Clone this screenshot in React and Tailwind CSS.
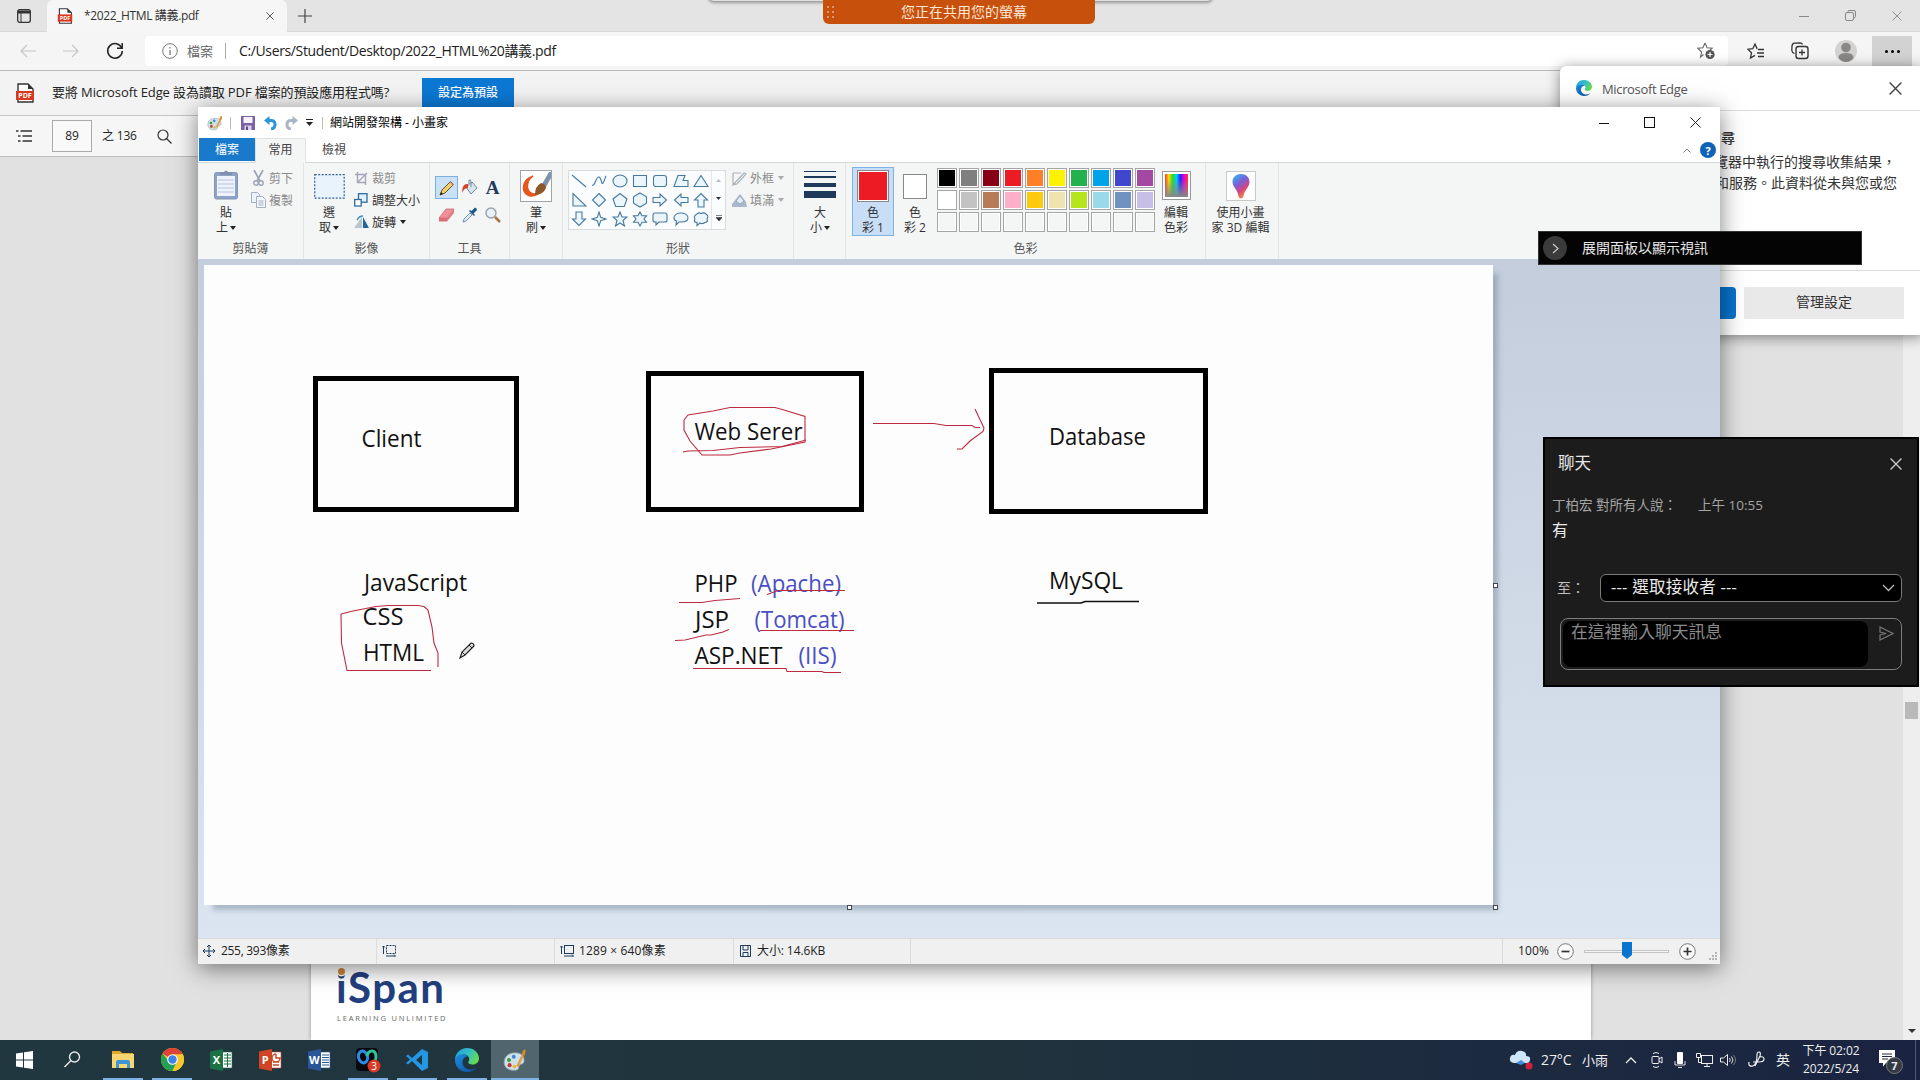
import React from "react";

const UI = "font-['Open_Sans','Noto_Sans_CJK_TC',sans-serif]";

function Svg({ w, h, vb, className = "", children }) {
  return (
    <svg width={w} height={h} viewBox={vb || `0 0 ${w} ${h}`} fill="none" className={"shrink-0 " + className}>
      {children}
    </svg>
  );
}

const Cross = ({ s = 11, c = "#333", sw = 1.2 }) => (
  <Svg w={s} h={s} vb="0 0 11 11"><path d="M.5.5l10 10M10.5.5l-10 10" stroke={c} strokeWidth={sw} /></Svg>
);
const Down = ({ c = "#222" }) => (
  <Svg w={6} h={4}><path d="M0 0h6L3 4z" fill={c} /></Svg>
);

const PdfIcon = ({ w, h }) => (
  <Svg w={w} h={h} vb="0 0 20 20">
    <path d="M3 1h10l5 5v13H3z" fill="#fff" stroke="#333" strokeWidth="1.4" />
    <path d="M13 1v5h5z" fill="#333" />
    <rect x="1" y="8" width="18" height="9" fill="#d9381e" />
    <text x="10" y="15" textAnchor="middle" fontSize="7" fontWeight="700" fill="#fff" fontFamily="Open Sans, sans-serif">PDF</text>
  </Svg>
);

const EdgeLogo = ({ s }) => (
  <Svg w={s} h={s} vb="0 0 24 24">
    <defs>
      <linearGradient id="edgeA" x1="0" y1="0" x2="1" y2="0.4"><stop offset="0" stopColor="#1b9de2" /><stop offset=".6" stopColor="#35c1c4" /><stop offset="1" stopColor="#62d957" /></linearGradient>
      <linearGradient id="edgeB" x1="0" y1="0" x2="1" y2="1"><stop offset="0" stopColor="#1b8fe0" /><stop offset="1" stopColor="#0c4f9e" /></linearGradient>
    </defs>
    <path d="M12 0c7 0 12 5 12 10.200c0 4-3 6.300-6.500 6.300c-3 0-4.300-1.300-4.300-2.200c0-.8 1-1.200 1-3C14.200 8.500 12 6.500 8.700 6.500C4 6.500.5 9.500 0 12C0 5 5.500 0 12 0z" fill="url(#edgeA)" />
    <path d="M0 12c.3-3 4-5.500 8.200-5.500c2 0 4 .8 5 2C10 8.200 7.500 10.800 7.500 14.500c0 5 5 7.500 9 7c2-.3 3.500-1 5.500-2.500C20 22 16.500 24 12 24C5 24 0 18.500 0 12z" fill="url(#edgeB)" />
  </Svg>
);

const Palette = ({ s }) => (
  <Svg w={s} h={s} vb="0 0 20 20">
    <path d="M1 12C1 7 5 4 10 4s8 3 7.500 7c-.4 3-3 2-4 3.500s.5 3.500-3 4C5 19 1 16.500 1 12z" fill="#cfe0ea" stroke="#8fa6b5" strokeWidth=".7" />
    <circle cx="5" cy="10" r="1.700" fill="#3f9a3d" /><circle cx="9" cy="7.300" r="1.600" fill="#3b86d1" />
    <circle cx="5.500" cy="14.300" r="1.700" fill="#c43a31" /><circle cx="9.500" cy="15.500" r="1.500" fill="#e8b92c" />
    <path d="M16.500 6L12 15.500" stroke="#e0a04a" strokeWidth="2.200" /><path d="M15 5.500l2.500-4.500l1.500 1l-1 4.500z" fill="#d08c2c" />
  </Svg>
);

/* ---------- Browser behind everything ---------- */

function BrowserTabs() {
  return (
    <div className="flex h-8 items-stretch bg-[#e4e4e4] border-b border-[#d9d9d9]">
      <div className="flex w-[47px] items-center justify-center">
        <Svg w={14} h={14}><rect x=".7" y=".7" width="12.600" height="12.600" rx="2" stroke="#333" strokeWidth="1.300" /><path d="M.7 3h12.600" stroke="#333" strokeWidth="3" /><path d="M4 3v10" stroke="#333" /></Svg>
      </div>
      <div className="flex h-8 w-[240px] items-center rounded-t-md bg-[#f6f6f6] pl-[10px]">
        <PdfIcon w={16} h={16} />
        <span className="ml-[11px] w-[182px] whitespace-nowrap text-[12px] leading-4 tracking-[-0.37px] text-[#333]">*2022_HTML 講義.pdf</span>
        <Cross s={8} c="#444" />
      </div>
      <div className="flex w-[35px] items-center justify-center"><Svg w={14} h={14}><path d="M7 0v14M0 7h14" stroke="#444" strokeWidth="1.200" /></Svg></div>
      <div className="flex flex-1 items-center justify-end gap-[36px] pr-[18px]">
        <Svg w={10} h={10}><path d="M0 5.500h10" stroke="#888" /></Svg>
        <Svg w={11} h={11}><rect x=".5" y="2.500" width="8" height="8" rx="1.500" stroke="#888" /><path d="M3 2V1.500q0-1 1-1h5q1.500 0 1.500 1.500v4.500q0 1-1.500 1.500" stroke="#888" /></Svg>
        <Cross s={10} c="#888" sw={1} />
      </div>
    </div>
  );
}

function AddressBar() {
  return (
    <div className="flex h-[39px] items-center border-b border-[#b9b9b9] bg-[#f5f5f5] pl-5">
      <div className="flex w-[125px] items-center gap-[27px]">
        <Svg w={16} h={14}><path d="M16 7H1M7 1L1 7l6 6" stroke="#c6c6c6" strokeWidth="1.200" /></Svg>
        <Svg w={16} h={14}><path d="M0 7h15M9 1l6 6l-6 6" stroke="#c6c6c6" strokeWidth="1.200" /></Svg>
        <Svg w={18} h={18}><path d="M15.800 6.200A7.300 7.300 0 1 0 16.300 9" stroke="#222" strokeWidth="1.500" /><path d="M16.200 1v5.200H11" stroke="#222" strokeWidth="1.500" /></Svg>
      </div>
      <div className="flex h-[30px] w-[1583px] items-center rounded bg-white pl-[17px]">
        <Svg w={16} h={16}><circle cx="8" cy="8" r="7.300" stroke="#777" /><path d="M8 7v5M8 4v1.500" stroke="#777" strokeWidth="1.300" /></Svg>
        <span className="ml-[9px] text-[13px] leading-5 text-[#666]">檔案</span>
        <span className="ml-[12px] h-4 w-px bg-[#aaa]" />
        <span className="ml-[13px] flex-1 whitespace-nowrap text-[14px] leading-5 tracking-[-0.37px] text-[#222]">C:/Users/Student/Desktop/2022_HTML%20講義.pdf</span>
        <Svg w={19} h={18} className="mr-[12px]"><path d="M8 1l2.100 4.700l5.100.5l-3.900 3.400M6.500 12.500L3.500 15l1.100-5L.8 6.200l5.100-.5L8 1" stroke="#666" strokeWidth="1.100" /><circle cx="13" cy="12.500" r="4.600" fill="#555" /><path d="M13 10v5M10.500 12.500h5" stroke="#fff" strokeWidth="1.200" /></Svg>
      </div>
      <div className="flex flex-1 items-center">
        <Svg w={18} h={17} className="ml-[19px]"><path d="M10.500 5.500H10L8 1L5.800 5.700L.8 6.200l3.700 3.600l-1 5.200l4.500-2.600" stroke="#333" strokeWidth="1.300" /><path d="M11 6.500h6M10 10h7M11 13.500h6" stroke="#333" strokeWidth="1.300" /></Svg>
        <Svg w={18} h={18} className="ml-[26px]"><path d="M3.500 11.500Q1 10.500.8 8.500L1 4q.3-2.500 2.500-2.800L9 .8q2 0 2.500 1.700" stroke="#333" strokeWidth="1.300" /><rect x="5" y="4.500" width="12" height="12" rx="2.500" stroke="#333" strokeWidth="1.400" /><path d="M11 7.500v6M8 10.500h6" stroke="#333" strokeWidth="1.300" /></Svg>
        <Svg w={22} h={22} className="ml-[26px]"><circle cx="11" cy="11" r="11" fill="#d4d2d0" /><circle cx="11" cy="7.500" r="4.800" fill="#8a8886" /><path d="M3.500 18q0-5 7.500-5t7.500 5q-3 4-7.500 4t-7.500-4z" fill="#8a8886" /></Svg>
        <div className="ml-[15px] flex h-[31px] w-[40px] items-center justify-center gap-[3px] bg-[#d2d2d2]">
          <span className="size-[3px] rounded-full bg-black" /><span className="size-[3px] rounded-full bg-black" /><span className="size-[3px] rounded-full bg-black" />
        </div>
      </div>
    </div>
  );
}

function Browser() {
  return (
    <div className="flex h-[1040px] flex-col">
      <BrowserTabs />
      <AddressBar />
      <div className="flex h-[45px] items-center border-b border-[#c4c4c4] bg-[#f3f3f3] pl-[15px] text-[13px] text-[#222]">
        <PdfIcon w={20} h={20} />
        <span className="ml-[17px] -mt-[2px] w-[370px] whitespace-nowrap leading-5 tracking-[-0.11px]">要將 Microsoft Edge 設為讀取 PDF 檔案的預設應用程式嗎?</span>
        <span className="flex h-[30px] w-[92px] items-center justify-center bg-[#0b78d4] text-[12px] font-medium text-white">設定為預設</span>
      </div>
      <div className="flex h-[41px] items-center border-b border-[#bdbdbd] bg-[#f6f6f6] pl-4 text-[12px] text-[#222]">
        <Svg w={16} h={12}><path d="M0 1h2.500M4.500 1H16M2 6h2.500M6.500 6H16M2 11h2.500M6.500 11H16" stroke="#333" strokeWidth="1.300" /></Svg>
        <span className="ml-5 flex h-[32px] w-[40px] items-center justify-center border border-[#aaa] bg-[#f9f9f9]">89</span>
        <span className="ml-[10px] w-[55px] leading-4 tracking-[-0.2px]">之 136</span>
        <Svg w={15} h={15}><circle cx="6" cy="6" r="5" stroke="#333" strokeWidth="1.200" /><path d="M9.500 9.500l5 5" stroke="#333" strokeWidth="1.200" /></Svg>
      </div>
      <div className="flex min-h-0 flex-1 bg-[#e1e1e1]">
        <div className="ml-[311px] flex w-[1280px] flex-col justify-end bg-white pl-[25px] pb-[17px] shadow-[0_0_4px_#999]">
          <div className="relative mb-[3px] h-[46px] w-[114px] whitespace-nowrap text-[42px] font-bold leading-[46px] tracking-[1.5px] text-[#22407f] font-['Lato',sans-serif]">
            iSpan
            <span className="absolute left-[2px] top-[4px] size-[7px] rounded-full bg-[#cf8638] shadow-[0_0_0_1.5px_white]" />
          </div>
          <div className="whitespace-nowrap pl-px text-[7.500px] leading-[10px] tracking-[1.8px] text-[#666]">LEARNING UNLIMITED</div>
        </div>
        <div className="ml-auto flex w-[17px] flex-col items-center bg-[#eeeeee]">
          <div className="mt-[545px] h-[17px] w-[13px] bg-[#b9b9b9]" />
          <div className="mt-auto mb-[7px]"><Svg w={8} h={4}><path d="M0 0h8L4 4z" fill="#333" /></Svg></div>
        </div>
      </div>
    </div>
  );
}

function EdgePopup() {
  return (
    <div className="absolute left-[1560px] top-[66px] flex h-[269px] w-[364px] flex-col rounded-md bg-white shadow-[0_2px_14px_rgba(0,0,0,0.45)]">
      <div className="flex h-[45px] items-center border-b border-[#ddd] pl-4">
        <EdgeLogo s={16} />
        <span className="ml-[10px] mt-[2px] w-[287px] text-[13px] leading-5 tracking-[-0.35px] text-[#555]">Microsoft Edge</span>
        <Cross s={13} c="#444" />
      </div>
      <div className="flex h-[160px] flex-col border-b border-[#ddd] pl-[154px] pt-[16px] text-[14px] text-[#333]">
        <div className="whitespace-nowrap pl-[7px] leading-[22px] font-medium">尋</div>
        <div className="mt-[2px] whitespace-nowrap leading-[21px]">覽器中執行的搜尋收集結果，</div>
        <div className="whitespace-nowrap pl-[1px] leading-[21px]">和服務。此資料從未與您或您</div>
      </div>
      <div className="flex pl-4 pt-4 text-[14px] text-[#333]">
        <span className="h-8 w-[160px] rounded-sm bg-[#0873cc]" />
        <span className="ml-2 flex h-8 w-[160px] items-center justify-center bg-[#e9e9e9] pb-[3px]">管理設定</span>
      </div>
    </div>
  );
}

/* ---------- Paint window ---------- */

function Group({ cls, label, children }) {
  return (
    <div className={"flex h-[96px] flex-col border-r border-[#e3e4e5] " + cls}>
      <div className="flex h-[76px]">{children}</div>
      <div className="h-[20px] text-center text-[12px] leading-[20px] text-[#555]">{label}</div>
    </div>
  );
}

function Big({ icon, a, b, arrow, cls = "" }) {
  return (
    <div className={"flex flex-col items-center text-[12px] leading-[15px] text-[#333] " + cls}>
      <div className="flex h-[42px] items-center justify-center">{icon}</div>
      <div className="h-[15px] whitespace-nowrap">{a}</div>
      <div className="flex h-[15px] items-center gap-[2px] whitespace-nowrap">{b}{arrow && <Down />}</div>
    </div>
  );
}

function Small({ icon, t, arrow, dim }) {
  return (
    <div className={"flex h-[22px] items-center whitespace-nowrap text-[12px] leading-[15px] " + (dim ? "text-[#8c8c8c]" : "text-[#333]")}>
      <span className="flex w-[16px] justify-center">{icon}</span>
      <span className="ml-[3px] mr-[4px]">{t}</span>
      {arrow && <Down c={dim ? "#aaa" : "#222"} />}
    </div>
  );
}

const SHAPES = [
  "M1 2L15 14", "M1 12C4 14 5 3 8 4S10 12 12 10S14 4 15 3", "M8 2C12 2 15 5 15 8S12 14 8 14S1 11 1 8S4 2 8 2z", "M1.500 2.500h13v11h-13z",
  "M4 2.500h8q2.500 0 2.500 2.500v6q0 2.500-2.500 2.500H4q-2.500 0-2.500-2.500V5q0-2.500 2.500-2.500z", "M5 2.500h7l-2 5h5v6H1z", "M8 2.500L15 13.500H1z",
  "M2 1.500v12.500h13z", "M8 1.500l6.500 6.500L8 14.500L1.500 8z", "M8 1.500l7 5.500l-2.700 7.500H3.700L1 7z", "M8 1l6.500 3.700v6.600L8 15L1.500 11.300V4.700z",
  "M1 5.500h7V2l6.500 6L8 14v-3.500H1z", "M15 5.500H8V2L1.500 8L8 14v-3.500h7z", "M5 15V8H1.500L8 1.500L14.500 8H11v7z",
  "M5 1v7H1.500L8 14.500L14.500 8H11V1z", "M8 1l1.700 5.300L15 8l-5.300 1.700L8 15l-1.700-5.300L1 8l5.300-1.700z", "M8 1l2 5h5l-4 3.500l1.500 5.500L8 12l-4.500 3L5 9.500L1 6h5z",
  "M8 1l2 3.700h4.500L12 8l2.500 3.300H10L8 15l-2-3.700H1.500L4 8L1.500 4.700H6z", "M3 2h10q2 0 2 2v5q0 2-2 2H7l-3 3v-3H3q-2 0-2-2V4q0-2 2-2z",
  "M8 2c4 0 7 2 7 4.700S12 11 8 11q-1 0-2 0l-3 3l.5-4C2 9.500 1 8 1 6.700C1 4 4 2 8 2z", "M4 3Q6 1 8 2.500Q11 1 13 3Q16 5 14 8Q15.500 11 12 11.500Q9 13.500 7 12L4 14.500V11.500Q0 11 2 8Q0 5 4 3z",
];

const ROW1 = ["bg-[#000000]", "bg-[#7f7f7f]", "bg-[#880015]", "bg-[#ed1c24]", "bg-[#ff7f27]", "bg-[#fff200]", "bg-[#22b14c]", "bg-[#00a2e8]", "bg-[#3f48cc]", "bg-[#a349a4]"];
const ROW2 = ["bg-[#ffffff]", "bg-[#c3c3c3]", "bg-[#b97a57]", "bg-[#ffaec9]", "bg-[#ffc90e]", "bg-[#efe4b0]", "bg-[#b5e61d]", "bg-[#99d9ea]", "bg-[#7092be]", "bg-[#c8bfe7]"];
const ROW3 = Array(10).fill("bg-[#f4f5f5]");

function Ribbon() {
  return (
    <div className="flex h-[96px] bg-[#f4f5f5]">
      <Group cls="w-[106px]" label="剪貼簿">
        <Big cls="ml-[13px] w-[30px]" a="貼" b="上" arrow icon={
          <Svg w={24} h={30} className="mt-[2px]"><rect x=".5" y="2.500" width="23" height="26.500" rx="2" fill="#8fa3c6" stroke="#8496b6" /><rect x="3" y="6" width="18" height="20" fill="#eef3fb" /><path d="M4 10h16M4 14h16M4 18h16M4 22h16" stroke="#b3c3df" /><path d="M6 5l1-3h3q2-3 4 0h3l1 3z" fill="#7f90ad" /></Svg>} />
        <div className="ml-[9px] flex flex-col pt-[4px]">
          <Small dim t="剪下" icon={<Svg w={11} h={16}><path d="M1 0l6 11M10 0L4 11" stroke="#9aa4b4" strokeWidth="1.700" /><circle cx="3" cy="13" r="2.200" stroke="#9aa4b4" strokeWidth="1.400" /><circle cx="8" cy="13" r="2.200" stroke="#9aa4b4" strokeWidth="1.400" /></Svg>} />
          <Small dim t="複製" icon={<Svg w={15} h={16}><path d="M.5.5h6l2 2v8h-8z" fill="#eef2f8" stroke="#a3b1c8" /><path d="M5.500 4.500h6l3 3v8h-9z" fill="#f4f7fb" stroke="#a3b1c8" /><path d="M7.500 9h5M7.500 11h5M7.500 13h5" stroke="#a3b1c8" /></Svg>} />
        </div>
      </Group>
      <Group cls="w-[126px]" label="影像">
        <Big cls="ml-[10px] w-[30px]" a="選" b="取" arrow icon={<Svg w={31} h={25} className="mt-[4px]"><rect x=".7" y=".7" width="29.500" height="23.500" fill="#e9f3fc" stroke="#2f6392" strokeWidth="1.200" strokeDasharray="2 1.500" /></Svg>} />
        <div className="ml-[9px] flex flex-col pt-[4px]">
          <Small dim t="裁剪" icon={<Svg w={13} h={13}><path d="M2.500 0v10.500H11M0 2.500h10.500V13M3 10L12 1" stroke="#a3a6bd" strokeWidth="1.400" /></Svg>} />
          <Small t="調整大小" icon={<Svg w={14} h={14}><rect x="4.500" y=".7" width="8.500" height="8.500" fill="#e3f1fb" stroke="#2b6ca3" strokeWidth="1.300" /><rect x=".7" y="6.500" width="6.500" height="6.500" fill="#fff" stroke="#2b6ca3" strokeWidth="1.300" /></Svg>} />
          <Small t="旋轉" arrow icon={<Svg w={15} h={14}><path d="M0 13h8V2z" fill="#b9c6d2" /><path d="M9 2v11h6z" fill="#23679a" /><path d="M3 5Q5 1 9 1" stroke="#3a8dc5" strokeWidth="1.300" /></Svg>} />
        </div>
      </Group>
      <Group cls="w-[80px]" label="工具">
        <div className="ml-[5px] mt-[13px] grid h-[55px] grid-cols-[23px_23px_23px] grid-rows-[23px_1fr] place-items-center">
          <span className="flex size-[23px] items-center justify-center border border-[#7ab0e5] bg-[#c9e0f7]"><Svg w={16} h={16}><path d="M1 15l2-5L11.500 1.500l3 3L6 13z" fill="#f0cf6a" stroke="#655227" /><path d="M1 15l1-3l2 2z" fill="#222" /><path d="M11.500 1.500l3 3l-1 1l-3-3z" fill="#d88" /></Svg></span>
          <Svg w={17} h={17}><path d="M5 8l6-5l5 6l-6 6z" fill="#d9e5ee" stroke="#73899c" /><path d="M8 5V1q2-1 2 2v5" stroke="#73899c" /><path d="M7 5Q1 4 1 14q2-5 6-5z" fill="#d8432c" /></Svg>
          <span className="font-['Liberation_Serif',serif] text-[19px] font-bold leading-[20px] text-[#223a5e]">A</span>
          <Svg w={17} h={14}><path d="M1 10l7-9h8l-7 9z" fill="#f0919a" stroke="#cf6a72" strokeWidth=".8" /><path d="M1 10h8v3.500H1z" fill="#dc6d77" /><path d="M9 10l7-9v4l-7 8.500z" fill="#e17d86" /></Svg>
          <Svg w={16} h={16}><path d="M1 15l1-3l6-6l2 2l-6 6z" fill="#dbeaf4" stroke="#5b7f9c" strokeWidth=".8" /><path d="M7 4l5 5l1-1l-1.500-1.500L15 3q0-2-2-2.500L9.500 4L8 3z" fill="#1d5788" /></Svg>
          <Svg w={16} h={16}><circle cx="6" cy="6" r="5" fill="#e6f1f8" stroke="#98a1a8" strokeWidth="1.400" /><path d="M10 10l5 5" stroke="#a9743f" strokeWidth="2.500" /></Svg>
        </div>
      </Group>
      <Group cls="w-[53px]" label="">
        <Big cls="ml-[9px] w-[34px]" a="筆" b="刷" arrow icon={
          <span className="mt-[4px] flex size-[32px] items-center justify-center border border-[#a0a4aa] bg-white"><Svg w={30} h={30}><path d="M12 5Q0 10 3 20Q7 28 17 23Q8 24 6.500 17Q6 9 12 5z" fill="#e4581d" stroke="#e4581d" strokeWidth="1.500" /><path d="M21 13L28 1l2 0v6l-5 9z" fill="#7d93ab" /><path d="M14 24Q14 15 20 12q5 1 5 5q-3 7-11 7z" fill="#8c5729" /></Svg></span>} />
      </Group>
      <Group cls="w-[231px]" label="形狀">
        <div className="ml-[5px] mt-[7px] flex h-[60px] w-[158px] border border-[#d8dcdf] bg-[#fbfcfd]">
          <div className="grid w-[142px] grid-cols-7 grid-rows-3 place-items-center">
            {SHAPES.map((d, i) => <Svg key={i} w={16} h={16}><path d={d} fill={i < 2 ? "none" : "#eaf6fc"} stroke="#48799f" strokeWidth="1.100" /></Svg>)}
          </div>
          <div className="flex w-[14px] flex-col items-center justify-around border-l border-[#e4e6e8]">
            <Svg w={5} h={3}><path d="M0 3h5L2.500 0z" fill="#bbb" /></Svg>
            <Svg w={5} h={3}><path d="M0 0h5L2.500 3z" fill="#333" /></Svg>
            <Svg w={6} h={6}><path d="M0 .5h6M0 2.500h6L3 6z" fill="#333" stroke="#333" strokeWidth=".6" /></Svg>
          </div>
        </div>
        <div className="ml-[5px] flex flex-col pt-[4px]">
          <Small dim arrow t="外框" icon={<Svg w={15} h={15}><path d="M1 2h8M1 2v11h3M1 14L12 2l2 1L5 13z" stroke="#a9b1b9" strokeWidth="1.200" /></Svg>} />
          <Small dim arrow t="填滿" icon={<Svg w={15} h={16}><path d="M0 15V12L8 2l6 8l1 5z" fill="#a9b8ca" /><path d="M4 9l4-5l4 5l-4 3z" fill="#e6edf5" stroke="#9aa9bb" /></Svg>} />
        </div>
      </Group>
      <Group cls="w-[52px]" label="">
        <Big cls="ml-[9px] w-[34px]" a="大" b="小" arrow icon={
          <div className="flex w-[32px] flex-col"><i className="h-px bg-[#1d3a5a]" /><i className="mt-[4px] h-[2px] bg-[#1d3a5a]" /><i className="mt-[5px] h-[4px] bg-[#1d3a5a]" /><i className="mt-[4px] h-[7px] bg-[#1d3a5a]" /></div>} />
      </Group>
      <Group cls="w-[360px]" label="色彩">
        <div className="ml-[6px] mt-[4px] h-[69px] w-[42px] border border-[#7fb2e4] bg-[#c7def6]">
          <Big cls="-mt-[5px]" a="色" b="彩 1" icon={<span className="mt-[3px] size-[32px] border border-[#888] bg-white p-[1px]"><span className="block size-full bg-[#ed1c24]" /></span>} />
        </div>
        <Big cls="ml-[6px] w-[30px]" a="色" b="彩 2" icon={<span className="mt-[4px] h-[25px] w-[24px] border border-[#888] bg-white" />} />
        <div className="ml-[7px] mt-[5px] grid h-[64px] grid-cols-[repeat(10,20px)] grid-rows-[repeat(3,20px)] gap-[2px]">
          {[...ROW1, ...ROW2, ...ROW3].map((c, i) => <span key={i} className="border border-[#a5a5a5] bg-white p-px"><span className={"block size-full " + c} /></span>)}
        </div>
        <Big cls="ml-[5px] w-[32px]" a="編輯" b="色彩" icon={<span className="mt-[3px] size-[29px] border border-[#999] bg-white p-[2px]"><span className="block size-full bg-[linear-gradient(to_bottom,transparent_20%,#888),linear-gradient(to_right,#f33,#fd0,#2d2,#0cf,#22f,#e0c,#f33)]" /></span>} />
      </Group>
      <Group cls="w-[73px]" label="">
        <Big cls="w-[69px]" a="使用小畫" b="家 3D 編輯" icon={<span className="mt-[3px] flex size-[30px] items-center justify-center border border-[#c9c9c9] bg-white"><Svg w={20} h={26}><defs><linearGradient id="p3d" x1="0" y1="0" x2=".5" y2="1"><stop offset="0" stopColor="#27c4ee" /><stop offset=".45" stopColor="#7b5fd8" /><stop offset=".75" stopColor="#d9447a" /><stop offset="1" stopColor="#f08a3a" /></linearGradient></defs><path d="M10 1c5 0 8.500 3.500 8.500 8c0 5-5 8-6 14q-.5 2.500-2.500 2.500T7.500 23c-.5-6-6-9-6-14C1.500 4.500 5 1 10 1z" fill="url(#p3d)" /></Svg></span>} />
      </Group>
    </div>
  );
}

const NOTES = [
  ["Client", 361.5, 447, 60], ["Web Serer", 694.5, 440, 108], ["Database", 1049, 445, 97],
  ["JavaScript", 364, 591, 103], ["CSS", 362.5, 625, 41], ["HTML", 363, 661, 61],
  ["PHP", 694.5, 592, 43], ["JSP", 695, 628, 34], ["ASP.NET", 694.5, 664, 88], ["MySQL", 1049, 589, 74],
  ["(Apache)", 751, 592, 90, 1], ["(Tomcat)", 754.5, 628, 90, 1], ["(IIS)", 798.5, 664, 38, 1],
];

const PEN = [
  "M684 420L688 415L713 411L730 407.500H775L784 410L805 416.500V442L771 449L740 453L730 455H702L690 441L684 430Z",
  "M683 452L688 451L713 450.500L740 447.500L782 446.500L806 440",
  "M679 602.500H702L715 600.500L740 598.500", "M675 640.500L685 640L706 635H711L723 632L729 629.500",
  "M693 668.500H786L787 671.500H822L824 672.500H841", "M767 594.500L778 590.500H845", "M760 630.500H854",
  "M341 614L353 611L376 606.500L388 605.500H418L424 606.500L428 610L432 627L434 643L438 653V667M341 614L341.500 643L347 670.500H431",
  "M873 423.500H934L946 425.500H972L975 427.500H980M975 409L984 428L983 431.500L970 441L962 449H957",
];

function Canvas() {
  return (
    <Svg w={1289} h={640} vb="204 265 1289 640" className="bg-[#fdfdfd]">
      <g stroke="#000" strokeWidth="5"><rect x="315.500" y="378.500" width="201" height="131" /><rect x="648.500" y="373.500" width="213" height="136" /><rect x="991.500" y="370.500" width="214" height="141" /></g>
      <g fontFamily="Open Sans, sans-serif" fontSize="24">
        {NOTES.map(([t, x, y, w, blue]) => <text key={t} x={x} y={y} textLength={w} lengthAdjust="spacingAndGlyphs" fill={blue ? "#4a4fc4" : "#111"}>{t}</text>)}
      </g>
      <g stroke="#bd2b40" strokeWidth="1.100">{PEN.map((d) => <path key={d} d={d} />)}</g>
      <path d="M1037 603H1081L1085 601.500H1139" stroke="#111" strokeWidth="1.500" />
      <path d="M460 658l2-6l9-9q3 0 3 3l-9 9z" fill="#ddd" stroke="#222" strokeWidth="1.200" />
      <path d="M462 652l3 3M469 645l3 3" stroke="#222" />
    </Svg>
  );
}

const Handle = ({ cls }) => <span className={"absolute size-[5px] border border-[#445] bg-white " + cls} />;

function StatusCell({ cls, icon, t }) {
  return (
    <div className={"flex items-center gap-[6px] whitespace-nowrap border-r border-[#dcdcdc] pb-px " + cls}>{icon}<span className="tracking-[-0.3px]">{t}</span></div>
  );
}

function PaintWindow() {
  return (
    <div className="absolute left-[198px] top-[107px] flex h-[857px] w-[1522px] flex-col bg-white shadow-[0_4px_22px_rgba(0,0,0,0.5)]">
      <div className="flex h-[31px] items-center pl-[9px]">
        <Palette s={16} />
        <span className="ml-[7px] h-[12px] w-px bg-[#bbb]" />
        <Svg w={14} h={14} className="ml-[10px]"><path d="M0 0h14v14H0z" fill="#7b62a6" /><path d="M2.500 1h9v6h-9z" fill="#f4f1f8" /><path d="M3.500 9.500h7V14h-7z" fill="#d9d0e6" /><path d="M5 10.500h2V14H5z" fill="#63489a" /></Svg>
        <Svg w={13} h={14} className="ml-[9px]"><path d="M3 4.500h4q4 0 4 4t-4 4.500" stroke="#2a97d8" strokeWidth="3" /><path d="M0 4.500L5.500 0v9z" fill="#2a97d8" /></Svg>
        <Svg w={13} h={14} className="ml-[8px]"><path d="M10 4.500H6q-4 0-4 4T6 13" stroke="#a9b6c2" strokeWidth="3" /><path d="M13 4.500L7.500 0v9z" fill="#a9b6c2" /></Svg>
        <Svg w={7} h={7} className="ml-[8px]"><path d="M0 .5h7" stroke="#222" /><path d="M0 3h7L3.500 7z" fill="#222" /></Svg>
        <span className="ml-[9px] h-[12px] w-px bg-[#bbb]" />
        <span className="ml-[7px] whitespace-nowrap text-[12px] leading-4 text-black">網站開發架構 - 小畫家</span>
        <div className="ml-auto flex items-center gap-[35px] pr-[19px]">
          <Svg w={10} h={10}><path d="M0 5.500h10" stroke="#111" /></Svg>
          <Svg w={11} h={11}><rect x=".5" y=".5" width="10" height="10" stroke="#111" /></Svg>
          <Cross s={11} c="#222" sw={1} />
        </div>
      </div>
      <div className="flex h-[25px] border-b border-[#d5d8da] text-[12px] leading-[23px] text-[#444]">
        <span className="ml-px h-[23px] w-[56px] bg-[#1979ca] text-center text-white">檔案</span>
        <span className="h-[25px] w-[51px] border-x border-t border-[#dfe1e3] bg-[#f4f5f5] text-center leading-[22px]">常用</span>
        <span className="ml-[16px]">檢視</span>
        <div className="ml-auto flex items-center gap-[9px] pr-[4px]">
          <Svg w={8} h={5}><path d="M.5 4.500L4 1l3.500 3.500" stroke="#888" /></Svg>
          <span className="flex size-[16px] items-center justify-center rounded-full bg-[#0f62b5] text-[11px] font-bold leading-none text-white">?</span>
        </div>
      </div>
      <Ribbon />
      <div className="relative flex h-[679px] bg-linear-to-b from-[#c3cddc] to-[#dbe5f1] pl-[6px] pt-[6px]">
        <div className="h-[640px] w-[1289px] shadow-[7px_7px_5px_-2px_rgba(120,140,155,0.5)]"><Canvas /></div>
        <Handle cls="left-[1295px] top-[324px]" />
        <Handle cls="left-[1295px] top-[646px]" />
        <Handle cls="left-[649px] top-[646px]" />
      </div>
      <div className="flex h-[26px] items-stretch border-t border-[#dadada] bg-[#f0f0f0] pl-[5px] text-[12px] leading-4 text-[#222]">
        <StatusCell cls="w-[174px]" t="255, 393像素" icon={<Svg w={12} h={12}><path d="M6 0v12M0 6h12M4 2l2-2l2 2M4 10l2 2l2-2M2 4L0 6l2 2M10 4l2 2l-2 2" stroke="#1d3c5c" /></Svg>} />
        <StatusCell cls="w-[178px] pl-[5px]" t="" icon={<Svg w={14} h={12}><rect x="4.500" y=".5" width="9" height="8" stroke="#1d3c5c" strokeDasharray="2 1" /><path d="M1.500 9V1M0 2.500L1.500 1L3 2.500M4 11h9M12 9.500l1.500 1.500L12 12.500" stroke="#1d3c5c" /></Svg>} />
        <StatusCell cls="w-[179px] pl-[5px] tracking-tight" t={<span className="tracking-[0.15px]">1289 × 640像素</span>} icon={<Svg w={14} h={12} className="-mr-px"><rect x="4.500" y=".5" width="9" height="8" stroke="#1d3c5c" /><path d="M1.500 9V1M0 2.500L1.500 1L3 2.500M4 11h9M12 9.500l1.500 1.500L12 12.500" stroke="#1d3c5c" /></Svg>} />
        <StatusCell cls="w-[177px] pl-[6px]" t={<span className="tracking-[-0.1px]">大小: 14.6KB</span>} icon={<Svg w={11} h={12}><path d="M.5.5h10v11H.5zM3 1v4h5V1M3 11V7.500h5V11" stroke="#1d3c5c" /></Svg>} />
        <div className="ml-[591px] flex flex-1 items-center border-l border-[#dcdcdc] pl-[15px]">
          <span className="w-[39px] pb-px tracking-[0.1px]">100%</span>
          <Svg w={17} h={17}><circle cx="8.500" cy="8.500" r="7.800" fill="#fafafa" stroke="#777" /><path d="M4.500 8.500h8" stroke="#333" strokeWidth="1.700" /></Svg>
          <div className="relative ml-[10px] h-[3px] w-[85px] border border-[#c4c4c4] bg-[#f6f6f6]">
            <Svg w={10} h={17} className="absolute -top-[9px] left-[37px]"><path d="M0 0h10v13l-5 4l-5-4z" fill="#0b74cf" /></Svg>
          </div>
          <Svg w={17} h={17} className="ml-[10px]"><circle cx="8.500" cy="8.500" r="7.800" fill="#fafafa" stroke="#777" /><path d="M4.500 8.500h8M8.500 4.500v8" stroke="#333" strokeWidth="1.700" /></Svg>
          <Svg w={9} h={9} className="mb-[3px] mr-[2px] ml-auto self-end"><path d="M6 0h2v2H6zM6 3h2v2H6zM3 3h2v2H3zM6 6h2v2H6zM3 6h2v2H3zM0 6h2v2H0z" fill="#b5b5b5" /></Svg>
        </div>
      </div>
    </div>
  );
}

/* ---------- Meeting overlays ---------- */

function SharePill() {
  return (
    <>
      <div className="absolute left-[708px] top-[-8px] h-[10px] w-[505px] rounded-b-md border border-[#a5a5a5] bg-[#dfdfdf] shadow-[0_1px_3px_#999]" />
      <div className="absolute left-[823px] top-0 flex h-6 w-[272px] items-center justify-center rounded-b-md bg-[#c6500c] pl-[10px] text-[14px] leading-6 text-[#fce6d6]">
        <div className="absolute left-[4px] top-[6px] grid grid-cols-2 gap-[3px]">
          {[0, 1, 2, 3, 4, 5].map((i) => <span key={i} className="size-[2px] bg-[#e39465]" />)}
        </div>
        您正在共用您的螢幕
      </div>
    </>
  );
}

function VideoBar() {
  return (
    <div className="absolute left-[1538px] top-[231px] flex h-[34px] w-[324px] items-center border border-[#333] bg-[#040404] pl-[4px] text-[14px] text-[#e6e6e6]">
      <span className="flex size-6 items-center justify-center rounded-full bg-[#3b3b3b]"><Svg w={7} h={11}><path d="M1 1l5 4.500L1 10" stroke="#ccc" strokeWidth="1.200" /></Svg></span>
      <span className="ml-[15px] pb-[2px]">展開面板以顯示視訊</span>
    </div>
  );
}

function ChatPanel() {
  return (
    <div className="absolute left-[1543px] top-[437px] flex h-[250px] w-[376px] flex-col border-2 border-black bg-[#1c1c1c] pl-[8px] text-[#e8e8e8]">
      <div className="flex h-[49px] items-center justify-between pl-[5px] pr-[15px] text-[16.500px]"><span>聊天</span><Cross s={12} c="#ccc" /></div>
      <div className="mt-[7px] flex h-[20px] whitespace-nowrap text-[13.500px] leading-5 text-[#a5a5a5]"><span className="-ml-px w-[146px]">丁柏宏 對所有人說：</span><span>上午 10:55</span></div>
      <div className="-ml-px mt-[3px] h-[24px] text-[16px] leading-6">有</div>
      <div className="mt-[32px] flex h-[28px] items-center pl-[4px]">
        <span className="w-[43px] pb-[2px] text-[14px] text-[#c0c0c0]">至：</span>
        <div className="flex h-[28px] w-[302px] items-center justify-between rounded-md border border-[#7a7a7a] bg-black pl-[10px] pr-[6px] text-[16.500px]"><span className="pb-px tracking-[0.25px]">--- 選取接收者 ---</span><Svg w={13} h={8}><path d="M1 1l5.500 5.500L12 1" stroke="#bbb" strokeWidth="1.300" /></Svg></div>
      </div>
      <div className="ml-[7px] mt-[16px] flex h-[52px] w-[342px] rounded-lg border border-[#7d7d7d] p-[2px]">
        <div className="h-full w-[305px] rounded-lg bg-black pl-[8px] text-[16.800px] leading-[22px] text-[#8a8a8a]">在這裡輸入聊天訊息</div>
        <Svg w={15} h={15} className="ml-[11px] mt-[5px]"><path d="M1 1l13 6.500L1 14V9l6-1.500L1 6z" stroke="#777" strokeWidth="1.200" /></Svg>
      </div>
    </div>
  );
}

/* ---------- Taskbar ---------- */

const Office = ({ c, l, rows }) => (
  <Svg w={24} h={24}>
    <path d="M12 4h11v16H12z" fill="#fff" stroke={c} strokeWidth=".6" />
    {rows}
    <path d="M1 3.500L14 1v22L1 20.500z" fill={c} />
    <text x="7.300" y="16" textAnchor="middle" fontSize="11" fontWeight="700" fill="#fff" fontFamily="Open Sans, sans-serif">{l}</text>
  </Svg>
);

function TaskItem({ cls, on, children }) {
  return (
    <div className={"flex h-10 flex-col items-center " + cls}>
      <div className="flex h-[38px] items-center justify-center pt-px">{children}</div>
      {on && <div className={"h-[2px] bg-[#7fb2e4] " + on} />}
    </div>
  );
}

function Taskbar() {
  return (
    <div className="absolute left-0 top-[1040px] flex h-10 w-[1920px] items-center bg-linear-to-r from-[#21373f] via-[#1f333c] to-[#1a2341] text-white">
      <TaskItem cls="w-[48px]"><Svg w={17} h={18}><path d="M0 2.500L7 1.500v7H0zM8 1.300L17 0v8.500H8zM0 9.500h7v7L0 15.500zM8 9.500h9V18l-9-1.300z" fill="#fff" /></Svg></TaskItem>
      <TaskItem cls="w-[49px]"><Svg w={17} h={17}><circle cx="10.500" cy="6" r="5" stroke="#e8e8e8" strokeWidth="1.400" /><path d="M7 9.500L.5 16" stroke="#e8e8e8" strokeWidth="1.400" /></Svg></TaskItem>
      <TaskItem cls="w-[51px]" on="w-[40px]"><Svg w={22} h={19}><path d="M0 1h8l2 2h11v4H0z" fill="#e0a92e" /><path d="M0 4h22v14H0z" fill="#f8d772" /><path d="M4 18v-6q0-2 2-2h10q2 0 2 2v6h-3v-4H7v4z" fill="#3d95d6" /></Svg></TaskItem>
      <TaskItem cls="w-[48px]" on="w-[40px]">
        <Svg w={23} h={23} vb="0 0 24 24"><circle cx="12" cy="12" r="12" fill="#f6c62c" /><path d="M12 12L1.600 6A12 12 0 0 1 22.400 6z" fill="#dd4437" /><path d="M1.600 6A12 12 0 0 0 12 24l4-9l-6 1z" fill="#23a155" /><path d="M12 6.500h10.700L22.400 6A12 12 0 0 1 12 24l5-9z" fill="#f6c62c" /><circle cx="12" cy="12" r="5.500" fill="#fff" /><circle cx="12" cy="12" r="4.400" fill="#4083e8" /></Svg>
      </TaskItem>
      <TaskItem cls="w-[49px]"><Office c="#1d7245" l="X" rows={<path d="M15 7h7M15 10h7M15 13h7M15 16h7M18.500 5v14" stroke="#1d7245" />} /></TaskItem>
      <TaskItem cls="w-[49px]"><Office c="#ce4425" l="P" rows={<path d="M15 14h6M15 17h6M18 6v4h4a4 4 0 1 1-4-4" stroke="#ce4425" strokeWidth="1.400" />} /></TaskItem>
      <TaskItem cls="w-[49px]"><Office c="#2a5699" l="W" rows={<path d="M15 7h7M15 9.500h7M15 12h7M15 14.500h7M15 17h7" stroke="#2a5699" />} /></TaskItem>
      <TaskItem cls="w-[49px]" on="w-[40px]">
        <Svg w={26} h={26}><rect x="1" y="1" width="22" height="23" rx="4" fill="#08090d" /><ellipse cx="8" cy="10" rx="4.500" ry="6" stroke="#2b8ceb" strokeWidth="3" transform="rotate(-15 8 10)" /><path d="M12 9q1-5 5-5t4 6q0 5-4 6" stroke="#2fc09b" strokeWidth="3" /><circle cx="19" cy="19" r="6.500" fill="#d93a26" /><text x="19" y="22.500" fontSize="10" textAnchor="middle" fill="#fff" fontFamily="Open Sans, sans-serif">3</text></Svg>
      </TaskItem>
      <TaskItem cls="w-[50px]" on="w-[40px]"><Svg w={24} h={24}><path d="M17 1l6 3v16l-6 3L7 13l-4 3.500L1 15l4-3.500L1 8l2-1.500L7 10zM17 7l-6 5l6 5z" fill="#2497e3" fillRule="evenodd" /></Svg></TaskItem>
      <TaskItem cls="w-[49px]" on="w-[40px]"><EdgeLogo s={24} /></TaskItem>
      <TaskItem cls="w-[48px] bg-[#50656e]" on="w-[48px]"><Palette s={24} /></TaskItem>

      <div className="ml-auto flex h-10 items-center text-[13px] leading-5 text-[#eee]">
        <Svg w={24} h={20}><path d="M5 13q-5-1-4-5t5-3q2-5 7-4t4 5q5 0 4 4t-4 3z" fill="#cfe6f8" /><path d="M7 13l5-3l4 3l-4 2z" fill="#3f8ede" /><circle cx="20" cy="16" r="3.500" fill="#d41f3a" /></Svg>
        <span className="ml-[8px] w-[41px] whitespace-nowrap text-[14px] tracking-[-0.1px]">27°C</span>
        <span className="w-[43px]">小雨</span>
        <Svg w={12} h={7}><path d="M1 6l5-5l5 5" stroke="#eee" strokeWidth="1.300" /></Svg>
        <Svg w={14} h={18} className="ml-[13px]"><rect x="2" y="5.500" width="7" height="7" rx="1" stroke="#eee" /><path d="M9 8l3-2v6l-3-2M3 2.500q3-2 6 0M3 15.500q3 2 6 0" stroke="#eee" /></Svg>
        <Svg w={12} h={18} className="ml-[10px]"><rect x="3" y="1" width="6" height="12" rx="1" fill="#fff" /><path d="M1 10v4h10v-4M4 16.500h4" stroke="#ddd" /></Svg>
        <Svg w={17} h={16} className="ml-[10px]"><rect x="5.500" y="3.500" width="11" height="8" stroke="#eee" /><path d="M.5 1.500h4v4h-4zM2.500 5.500v5h3M8 14.500h6M11 12v2" stroke="#eee" /></Svg>
        <Svg w={16} h={14} className="ml-[7px]"><path d="M.5 5h3l4-3.500v11L3.500 9h-3z" stroke="#eee" /><path d="M9.500 5q1.500 2 0 4M11.500 3.500q3 3.500 0 7" stroke="#ddd" /><path d="M13.500 2q4 5 0 10" stroke="#777" /></Svg>
        <Svg w={18} h={18} className="ml-[12px]"><path d="M1 11q-1 5 4 4Q9 13 9 4q0-3 2-3t1 4L7 15M5 11h6M11 6q5-1 5 2t-5 3" stroke="#eee" strokeWidth="1.200" /></Svg>
        <span className="ml-[10px] w-[25px] text-[14px]">英</span>
        <div className="w-[60px] whitespace-nowrap text-center text-[12px] leading-[18px] tracking-[-0.1px]"><div>下午 02:02</div><div>2022/5/24</div></div>
        <div className="relative ml-[17px] h-[26px] w-[26px]">
          <Svg w={18} h={17} className="mt-[3px]"><path d="M1 0h16v13H8l-3 3.500V13H1z" fill="#fff" /><path d="M4 4h10M4 6.500h10M4 9h6" stroke="#222b45" /></Svg>
          <span className="absolute left-[8px] top-[10px] flex size-[17px] items-center justify-center rounded-full border border-[#777] bg-[#333a45] text-[11px] leading-none font-bold">7</span>
        </div>
        <span className="ml-[11px] mr-[4px] h-10 w-px bg-[#51597a]" />
      </div>
    </div>
  );
}

export default function App() {
  return (
    <div className={"relative h-[1080px] w-[1920px] overflow-hidden bg-[#e1e1e1] " + UI}>
      <Browser />
      <EdgePopup />
      <PaintWindow />
      <SharePill />
      <VideoBar />
      <ChatPanel />
      <Taskbar />
    </div>
  );
}
